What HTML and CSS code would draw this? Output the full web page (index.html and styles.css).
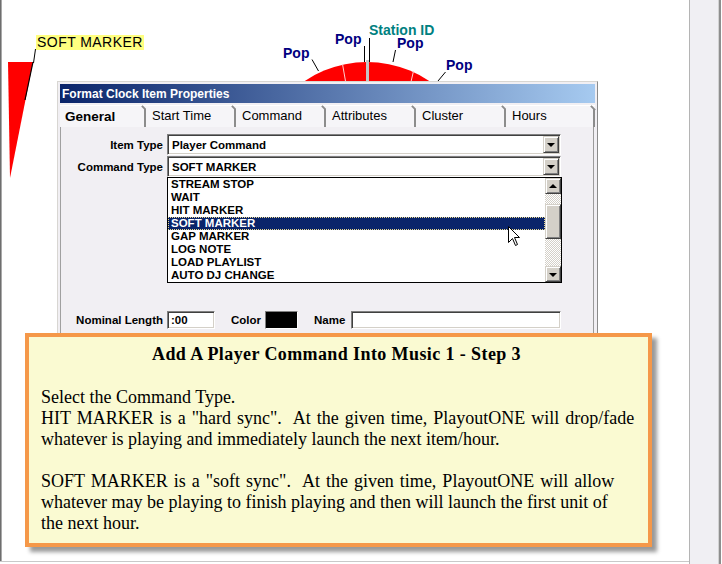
FILE: index.html
```html
<!DOCTYPE html>
<html>
<head>
<meta charset="utf-8">
<title>Format Clock Item Properties</title>
<link rel="stylesheet" href="styles.css">
</head>
<body>
<div class="screen">
  <div class="canvas">
    <svg class="clock" width="689" height="561" viewBox="0 0 689 561">
      <polygon points="8,62 33,62 10,178" fill="#ff0000"/>
      <line x1="35.5" y1="49" x2="33.5" y2="63" stroke="#000" stroke-width="1"/>
      <line x1="33" y1="62" x2="25" y2="100" stroke="#000" stroke-width="1.2"/>
      <circle cx="367" cy="174" r="112" fill="#ff0000"/>
      <line x1="342.5" y1="64" x2="346" y2="84" stroke="#ffd0d0" stroke-width="1"/>
      <line x1="413.5" y1="71" x2="410.5" y2="84" stroke="#ffd0d0" stroke-width="1"/>
      <rect x="366" y="60" width="3" height="26" fill="#c4c4c4"/>
      <line x1="312" y1="59.5" x2="318.5" y2="71" stroke="#000"/>
      <line x1="364.5" y1="46" x2="364.5" y2="62" stroke="#000"/>
      <line x1="369.5" y1="38" x2="369.5" y2="62" stroke="#000"/>
      <line x1="395.5" y1="50" x2="393" y2="62" stroke="#000"/>
      <line x1="445.5" y1="72" x2="438" y2="81" stroke="#000"/>
    </svg>
    <span class="softtag">SOFT MARKER</span>
    <span class="lbl pop1">Pop</span>
    <span class="lbl pop2">Pop</span>
    <span class="lbl station">Station ID</span>
    <span class="lbl pop3">Pop</span>
    <span class="lbl pop4">Pop</span>

    <div class="dialog">
      <div class="titlebar">Format Clock Item Properties</div>
      <div class="tabs">
        <div class="tab first">General</div>
        <div class="tab">Start Time</div>
        <div class="tab">Command</div>
        <div class="tab">Attributes</div>
        <div class="tab">Cluster</div>
        <div class="tab last">Hours</div>
      </div>
      <div class="pane">
        <div class="row">
          <div class="lab">Item Type</div>
          <div class="combo"><span class="val">Player Command</span><span class="ddbtn"></span></div>
        </div>
        <div class="row row2">
          <div class="lab">Command Type</div>
          <div class="combo"><span class="val">SOFT MARKER</span><span class="ddbtn"></span></div>
        </div>
        <div class="row">
          <div class="lab"></div>
          <div class="listbox">
            <div class="items">
              <div class="item">STREAM STOP</div>
              <div class="item">WAIT</div>
              <div class="item">HIT MARKER</div>
              <div class="item sel">SOFT MARKER</div>
              <div class="item">GAP MARKER</div>
              <div class="item">LOG NOTE</div>
              <div class="item">LOAD PLAYLIST</div>
              <div class="item">AUTO DJ CHANGE</div>
            </div>
            <div class="sb">
              <div class="sbbtn up"></div>
              <div class="track t1"></div>
              <div class="thumb"></div>
              <div class="track t2"></div>
              <div class="sbbtn down"></div>
            </div>
          </div>
        </div>
        <div class="row nrow">
          <div class="lab">Nominal Length</div>
          <div class="inp len">:00</div>
          <div class="lab2 lab-color">Color</div>
          <div class="swatch"></div>
          <div class="lab2 lab-name">Name</div>
          <div class="inp name"></div>
        </div>
      </div>
    </div>

    <div class="note">
      <div class="note-title">Add A Player Command Into Music 1 - Step 3</div>
      <p>Select the Command Type.<br><span class="wide">HIT MARKER is a "hard sync".&nbsp; At the given time, PlayoutONE will drop/fade</span><br>whatever is playing and immediately launch the next item/hour.</p>
      <p><span class="wide">SOFT MARKER is a "soft sync".&nbsp; At the given time, PlayoutONE will allow</span><br>whatever may be playing to finish playing and then will launch the first unit of<br>the next hour.</p>
    </div>

    <svg class="cursor" width="14" height="22" viewBox="0 0 14 22">
      <path d="M1.5 1.5 L1.5 17.5 L5.5 13.5 L8.5 20.5 L10.5 19.5 L7.5 12.5 L12.5 12.5 Z" fill="#fff" stroke="#000" stroke-width="1" stroke-linejoin="miter"/>
    </svg>
  </div>
  <div class="side">
    <div class="side-panel"></div>
    <div class="side-edge"></div>
    <div class="side-gap"></div>
  </div>
</div>
</body>
</html>
```

FILE: styles.css
```css
* { box-sizing: border-box; }
html, body { margin: 0; padding: 0; background: #fff; }
body {
  width: 722px; height: 564px; overflow: hidden;
  font-family: "Liberation Sans", Arial, sans-serif;
  color: #000;
}
.screen { display: flex; width: 722px; height: 564px; }

.canvas {
  position: relative; flex: none;
  width: 689px; height: 562px;
  border-bottom: 1px solid #c9c9c9;
  box-shadow: inset 1px 0 0 #6e6e6e, inset 2px 0 0 #a9a9a9;
}
.clock { position: absolute; left: 0; top: 0; }

.side { display: flex; width: 33px; height: 564px; flex: none; }
.side-panel { flex: 1; background: #f0eff3; border-left: 1px solid #b4b4b4; border-right: 1px solid #d2d2d2; }
.side-edge { width: 2px; background: #8e8e8e; }
.side-gap { width: 1px; background: #fff; }

/* diagram labels */
.softtag {
  position: absolute; left: 36px; top: 35px;
  width: 108px; height: 15px;
  background: #ffff80;
  font-size: 14px; line-height: 15px; letter-spacing: 0.45px;
  padding-left: 1px; white-space: nowrap;
}
.lbl {
  position: absolute; white-space: nowrap;
  font-weight: bold; font-size: 14px; line-height: 12px;
  color: #000080;
}
.pop1 { left: 283px; top: 47px; }
.pop2 { left: 335px; top: 33px; }
.station { left: 369px; top: 24px; color: #008080; }
.pop3 { left: 397px; top: 37px; }
.pop4 { left: 446px; top: 59px; }

/* dialog window */
.dialog {
  position: absolute; left: 57px; top: 81px;
  width: 541px; height: 285px;
  border: 1px solid; border-color: #d8d6d2 #8a8a8a #8a8a8a #d8d6d2;
  padding: 2px;
  background: #f1eff3;
  display: flex; flex-direction: column;
}
.titlebar {
  flex: none; height: 19px;
  background: linear-gradient(90deg, #0a246a 0%, #a6caf0 100%);
  color: #fff; font-weight: bold; font-size: 12px;
  line-height: 18px; padding: 1px 0 0 2px;
  white-space: nowrap;
}
.tabs { flex: none; display: flex; height: 24px; padding-top: 2px; }
.tab {
  position: relative; width: 90px;
  border-top: 1px solid #fff;
  background: #f6f5f8;
  padding-left: 6px;
  font-size: 13px; line-height: 20px; white-space: nowrap;
}
.tab.first { width: 86px; padding-left: 5px; font-weight: bold; font-size: 13.5px; line-height: 21px; }
.tab.last { width: 89px; }
.tab::after {
  content: ""; position: absolute; right: 0; top: 3px; bottom: 0;
  width: 2px; background: #8c8c8c;
}
.tab::before {
  content: ""; position: absolute; right: -1px; top: 1px;
  width: 6px; height: 2px; background: #8c8c8c;
  transform: rotate(45deg);
}

.pane {
  flex: 1;
  margin-right: 1px;
  border-left: 1px solid #a0a0a0;
  border-right: 1px solid #9a9a9a;
  padding-top: 7px;
  font-size: 11.5px; font-weight: bold;
}
.row { display: flex; align-items: center; }
.row2 { margin-top: 1px; }
.lab {
  flex: none; width: 102px; margin-right: 4px;
  text-align: right; white-space: nowrap;
}

.combo {
  width: 394px; height: 21px;
  background: #fff;
  border: 1px solid; border-color: #808080 #fff #fff #808080;
  box-shadow: inset 1px 1px 0 #404040, inset -1px -1px 0 #d4d0c8;
  display: flex; align-items: center;
  padding: 0 1px 0 4px;
  white-space: nowrap;
}
.combo .val { flex: 1; }
.ddbtn, .sbbtn {
  flex: none; width: 16px; height: 17px;
  background: #d4d0c8;
  border: 1px solid; border-color: #d4d0c8 #404040 #404040 #d4d0c8;
  box-shadow: inset 1px 1px 0 #fff, inset -1px -1px 0 #808080;
  display: flex; align-items: center; justify-content: center;
}
.ddbtn::after, .sbbtn.down::after {
  content: ""; width: 0; height: 0;
  border-style: solid; border-width: 4px 4px 0 4px;
  border-color: #000 transparent transparent transparent;
  margin-left: -1px; margin-top: 1px;
}
.sbbtn { height: 16px; }
.sbbtn.up::after {
  content: ""; width: 0; height: 0;
  border-style: solid; border-width: 0 4px 4px 4px;
  border-color: transparent transparent #000 transparent;
  margin-left: -1px; margin-top: -1px;
}

.listbox {
  width: 395px; height: 106px;
  border: 1px solid #000;
  background: #fff;
  display: flex;
}
.items { flex: 1; }
.item {
  height: 13px; line-height: 13px;
  padding-left: 3px; white-space: nowrap;
}
.item.sel {
  background: #0a246a; color: #fff;
  outline: 1px dotted #e8d88e; outline-offset: -1px;
}
.sb { width: 16px; display: flex; flex-direction: column; }
.track {
  background: repeating-conic-gradient(#d4d0c8 0 25%, #fff 0 50%) 0 0 / 2px 2px;
}
.t1 { height: 10px; }
.t2 { height: 27px; }
.thumb {
  height: 35px; background: #d4d0c8;
  border: 1px solid; border-color: #d4d0c8 #404040 #404040 #d4d0c8;
  box-shadow: inset 1px 1px 0 #fff, inset -1px -1px 0 #808080;
}

.nrow { margin-top: 28px; height: 18px; }
.inp {
  height: 18px; background: #fff;
  border: 1px solid; border-color: #808080 #fff #fff #808080;
  box-shadow: inset 1px 1px 0 #404040, inset -1px -1px 0 #d4d0c8;
  padding-left: 3px; line-height: 16px;
}
.len { width: 48px; }
.lab2 { flex: none; white-space: nowrap; }
.lab-color { width: 30px; margin-left: 16px; }
.swatch {
  width: 33px; height: 18px; margin-left: 4px; margin-top: -1px;
  background: #000;
  border: 1px solid; border-color: #808080 #fff #fff #808080;
}
.lab-name { width: 33px; margin-left: 16px; }
.name { width: 210px; margin-left: 4px; }

/* instruction note */
.note {
  position: absolute; left: 25px; top: 333px;
  width: 627px; height: 214px;
  border: 4px solid #f59849;
  background: #fafad2;
  box-shadow: 5px 5px 4px rgba(0, 0, 0, 0.4);
  padding: 7px 0 0 12px;
  font-family: "Liberation Serif", "Times New Roman", serif;
  font-size: 18px; line-height: 21px; color: #000;
}
.note-title {
  font-weight: bold; text-align: center;
  margin: 0 4px 22px -12px; white-space: nowrap;
  letter-spacing: 0.4px;
}
.note p { margin: 0 0 21px; white-space: nowrap; }
.note .wide { word-spacing: 1.5px; }

.cursor { position: absolute; left: 507px; top: 225px; }
```
